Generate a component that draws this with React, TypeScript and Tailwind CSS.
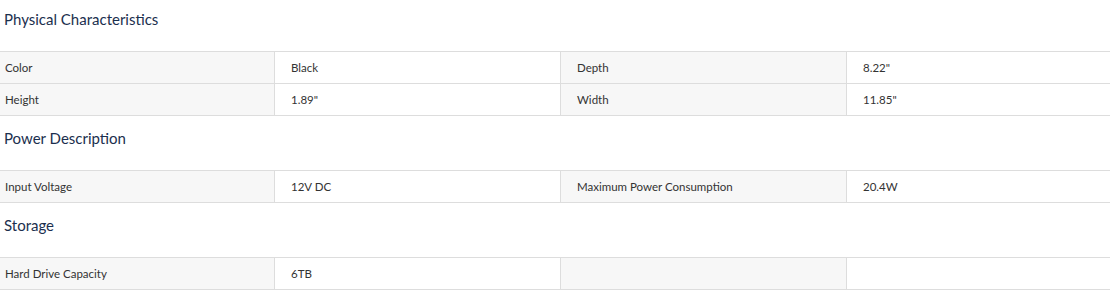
const sections = [
  {
    title: "Physical Characteristics",
    rows: [
      ["Color", "Black", "Depth", '8.22"'],
      ["Height", '1.89"', "Width", '11.85"'],
    ],
  },
  {
    title: "Power Description",
    rows: [["Input Voltage", "12V DC", "Maximum Power Consumption", "20.4W"]],
  },
  {
    title: "Storage",
    rows: [["Hard Drive Capacity", "6TB", "", ""]],
  },
];

export default function App() {
  return (
    <div className="w-[1110px] bg-white font-['Lato','Open_Sans',sans-serif] text-[#333333]">
      {sections.map((section, si) => (
        <div key={section.title}>
          {/* Section heading */}
          <div
            className={
              si === 0
                ? "h-[51px] pl-[4px] pt-[9px]"
                : "h-[54px] pl-[4px] pt-[12px]"
            }
          >
            <h3 className="text-[15px] leading-[20px] text-[#1b2f4e]">
              {section.title}
            </h3>
          </div>

          {/* Spec table */}
          <div className="grid grid-cols-[275px_286px_286px_1fr] border-t border-[#dddddd] text-[11.5px]">
            {section.rows.map((row, ri) =>
              row.map((cell, ci) => (
                <div
                  key={`${ri}-${ci}`}
                  className={`flex h-8 items-center border-b border-[#dddddd] ${
                    ci < 3 ? "border-r" : ""
                  } ${ci % 2 === 0 ? "bg-[#f7f7f7]" : "bg-white"} ${
                    ci === 0 ? "pl-[5px]" : "pl-[16px]"
                  }`}
                >
                  {cell}
                </div>
              ))
            )}
          </div>
        </div>
      ))}
    </div>
  );
}
